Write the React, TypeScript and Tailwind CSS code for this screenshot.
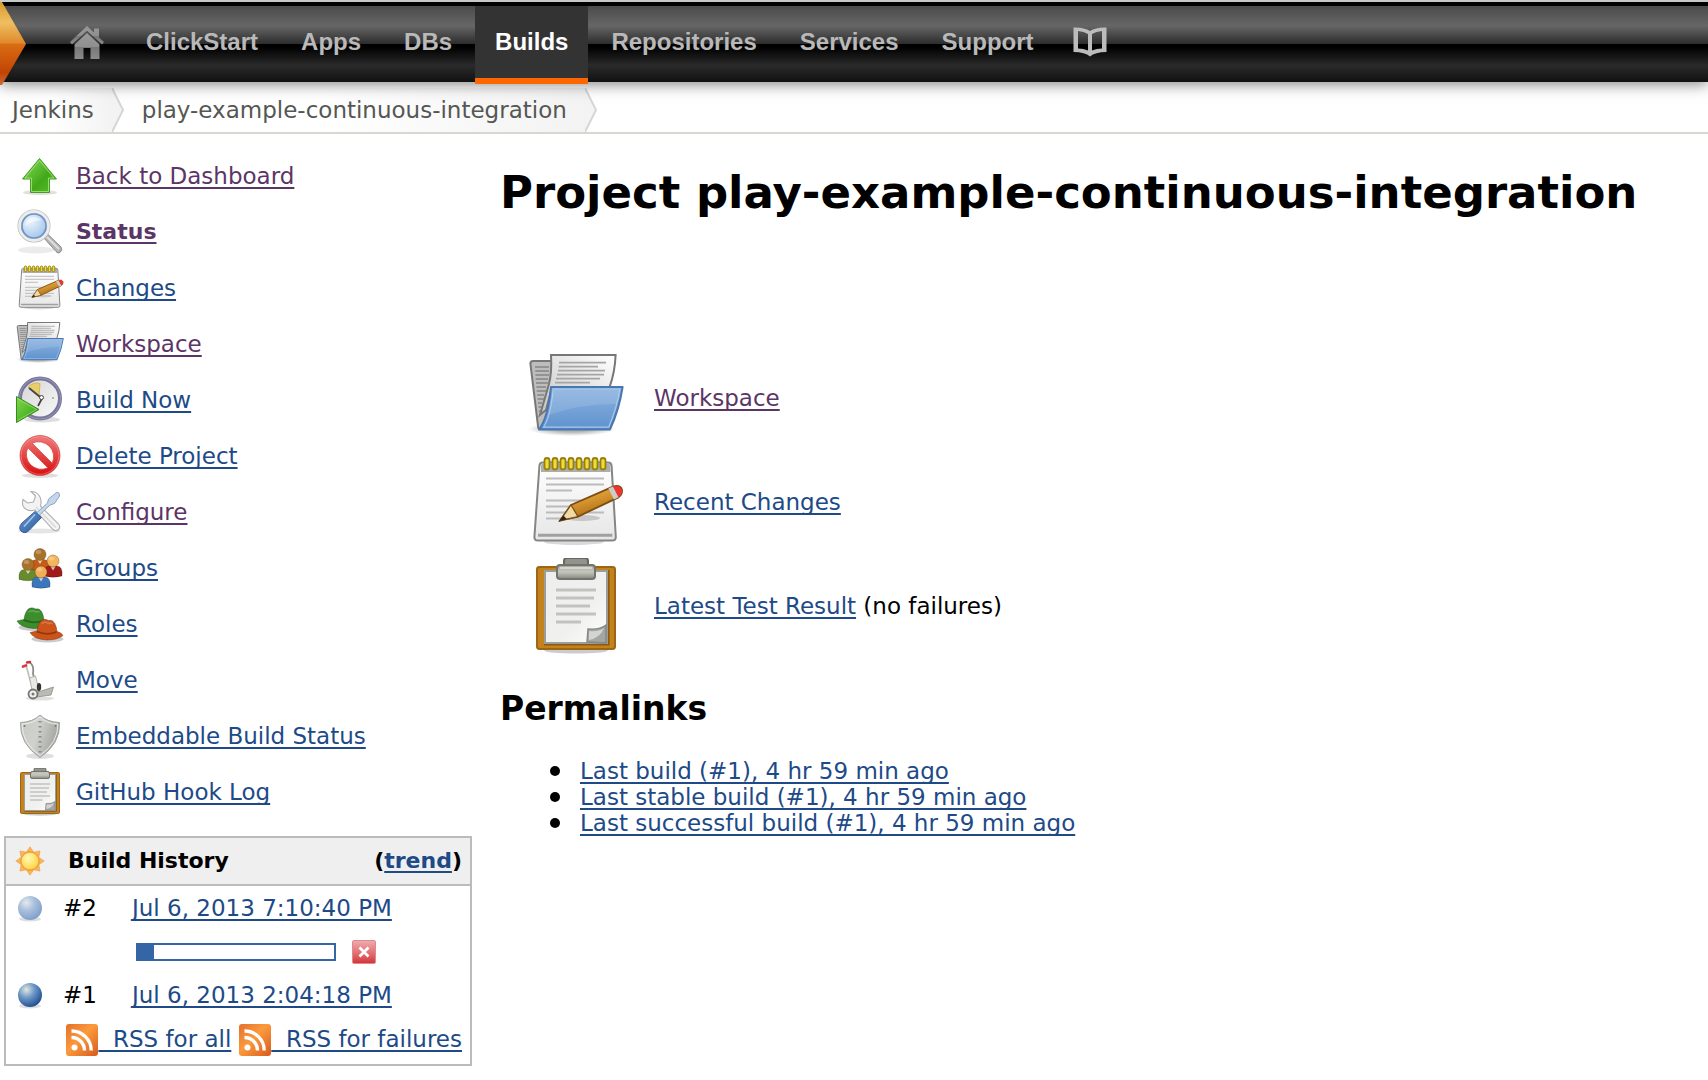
import React from "react";

type IconProps = { className?: string };

const svgProps = (className = "size-12") => ({
  viewBox: "0 0 48 48",
  className: `${className} block shrink-0`,
  "aria-hidden": true as const,
});

function Folder({ className }: IconProps) {
  return (
    <svg {...svgProps(className)}>
      <defs>
        <linearGradient id="fo-front" x1="0" y1="0" x2="0" y2="1">
          <stop offset="0" stopColor="#8bb2df" />
          <stop offset="0.5" stopColor="#76a3d7" />
          <stop offset="1" stopColor="#5f92cd" />
        </linearGradient>
        <linearGradient id="fo-paper" x1="1" y1="0" x2="0" y2="1">
          <stop offset="0" stopColor="#ffffff" />
          <stop offset="1" stopColor="#c4c4c4" />
        </linearGradient>
        <radialGradient id="fo-shadow">
          <stop offset="0.4" stopColor="#000" stopOpacity="0.3" />
          <stop offset="1" stopColor="#000" stopOpacity="0" />
        </radialGradient>
      </defs>
      <ellipse cx="22" cy="39.500" rx="22" ry="3.500" fill="url(#fo-shadow)" />
      <path d="M1.200 6.800Q1.200 5.500 2.500 5.500H12V30L6 39.500Q5 39.500 5 38Z" fill="#bdbdbd" stroke="#777" />
      <path d="M3.500 8.500H10.500M3.600 10.500H10.500M3.700 12.500H10.500M3.800 14.500H10M4 16.500H10M4.200 18.500H9M4.400 20.500H9M4.600 22.500H8M4.800 24.500H8M5 26.500H7M5.200 28.500H7M5.400 30.500H7" stroke="#858585" strokeWidth="0.700" />
      <path d="M11.500 2.500H43.800Q43.500 11 40.800 18.500H12L9 30L6 32.500Q8.500 24 10.500 17Q12 11 11.500 2.500Z" fill="url(#fo-paper)" stroke="#777" />
      <path d="M15.500 6.300H39M15.300 8.300H35M15 10.300H38.500M14.500 12.300H38M14 14.300H36M13.500 16.300H31" stroke="#a5a5a5" strokeWidth="0.800" />
      <path d="M11.500 18.500H47.300Q45.500 30 41 39.700H5.500Q10 34 11.500 18.500Z" fill="url(#fo-front)" stroke="#4877b2" strokeLinejoin="round" />
      <path d="M12.600 19.600H46Q44.300 29.500 40.300 38.600H7.800Q11.300 33 12.600 19.600Z" fill="none" stroke="#a9c7e9" strokeWidth="0.600" />
      <path d="M12.500 20H46L44.200 27Q25 27 10.500 32.500Z" fill="#fff" opacity="0.120" />
    </svg>
  );
}

function Notepad({ className }: IconProps) {
  return (
    <svg {...svgProps(className)}>
      <defs>
        <linearGradient id="np-page" x1="0" y1="0" x2="0" y2="1">
          <stop offset="0" stopColor="#ffffff" />
          <stop offset="1" stopColor="#e6e6e6" />
        </linearGradient>
        <linearGradient id="np-pen" x1="0" y1="0" x2="0.500" y2="1">
          <stop offset="0" stopColor="#f3c36d" />
          <stop offset="0.500" stopColor="#d6962f" />
          <stop offset="1" stopColor="#a66410" />
        </linearGradient>
      </defs>
      <ellipse cx="23" cy="44" rx="15" ry="1.500" fill="#000" opacity="0.150" />
      <path d="M5.700 6Q5.800 4.300 7.500 4.300H40Q41.700 4.300 41.800 6L43.900 41.500Q43.900 43.300 42 43.300H5Q3.200 43.300 3.200 41.500Z" fill="url(#np-page)" stroke="#858585" />
      <path d="M6.500 9V6Q6.500 4.800 8 4.800H39.500Q41 4.800 41.200 6V9Z" fill="#adadad" />
      <path d="M5 40.600H42.200" stroke="#a0a0a0" strokeWidth="1.500" />
      {[8.5, 12.5, 16.5, 20.500, 24.5, 28.5, 32.5, 36.500].map((x) => (
        <rect key={x} x={x - 0.25} y="2" width="2.500" height="5.700" rx="1.250" fill="#efdc38" stroke="#96800c" strokeWidth="0.900" />
      ))}
      <path d="M9 12.300H38M9 15.300H38M9 18.300H22M9 23.300H27M9 26.300H22M9 29.300H38M9 32.300H20" stroke="#bcbcbc" strokeWidth="1" />
      <ellipse cx="27" cy="32" rx="9" ry="1.500" fill="#000" opacity="0.160" />
      <path d="M21.500 25.500L42.500 16.300Q46 15.300 47 17.800Q47.300 20.500 45 21.800L25 31.300L16 33.300Z" fill="url(#np-pen)" stroke="#7d4c10" strokeWidth="0.900" />
      <path d="M21.500 25.500L25 31.300L16 33.300Z" fill="#efd9a7" stroke="#7d4c10" strokeWidth="0.600" />
      <path d="M17.700 30.800L19.500 32.600L15.500 33.500Z" fill="#302516" />
      <path d="M40.200 17.300L42.500 16.300L45.500 21.500L43 22.700Z" fill="#ccc" />
      <path d="M42.500 16.300Q46 15.300 47 17.800Q47.300 20.300 45.200 21.600Z" fill="#ee3333" />
    </svg>
  );
}

function Clipboard({ className }: IconProps) {
  return (
    <svg {...svgProps(className)}>
      <defs>
        <linearGradient id="cb-paper" x1="0" y1="0" x2="1" y2="1">
          <stop offset="0" stopColor="#eeeeec" />
          <stop offset="0.600" stopColor="#f0f0ef" />
          <stop offset="1" stopColor="#ffffff" />
        </linearGradient>
        <linearGradient id="cb-clip" x1="0" y1="0" x2="0" y2="1">
          <stop offset="0" stopColor="#a6a89e" />
          <stop offset="0.500" stopColor="#c5c7bf" />
          <stop offset="1" stopColor="#85877e" />
        </linearGradient>
      </defs>
      <ellipse cx="24" cy="46.300" rx="16" ry="1.500" fill="#000" opacity="0.200" />
      <rect x="4.500" y="4.500" width="39" height="41" rx="1.200" fill="#c4821f" stroke="#9c6715" />
      <path d="M40 6V43H8" stroke="#8a5a10" strokeWidth="1.600" fill="none" />
      <path d="M8.500 6.500H39.500V42.500H8.500Z" fill="url(#cb-paper)" stroke="#9b9d98" />
      <path d="M14 16H34M14 20H33M14 24H31M14 28H34M14 32H26.500" stroke="#c2c2c1" strokeWidth="1.500" />
      <path d="M29.500 42L30 35.500Q36 36 39 33.500V42.500Z" fill="#a4a6a2" stroke="#858783" strokeWidth="0.700" />
      <path d="M30.500 41V36.500Q35 37 38 35Q36 40 30.500 41Z" fill="#d4d4d2" />
      <path d="M18 5V1.500Q18 0 19.500 0H28.500Q30 0 30 1.500V5Z" fill="#92948b" stroke="#666862" />
      <rect x="14.500" y="3.500" width="19" height="7" rx="1.500" fill="url(#cb-clip)" stroke="#71736d" />
      <path d="M16 5H32" stroke="#deded9" strokeWidth="0.800" />
    </svg>
  );
}

function UpArrow() {
  return (
    <svg {...svgProps()}>
      <defs>
        <linearGradient id="up" x1="0" y1="0" x2="1" y2="1">
          <stop offset="0" stopColor="#8be05a" />
          <stop offset="0.600" stopColor="#42a81a" />
          <stop offset="1" stopColor="#55c028" />
        </linearGradient>
      </defs>
      <ellipse cx="24" cy="40.500" rx="17" ry="2.500" fill="#000" opacity="0.130" />
      <path d="M23.500 6.500L40.500 27H33.500V40.500H14.500V27H6.500Z" fill="url(#up)" stroke="#4c9a2c" strokeLinejoin="round" />
      <path d="M23.500 8.500L38 26H32.500V39.500H15.500V26H9Z" fill="none" stroke="#a6eb7b" strokeWidth="0.800" />
    </svg>
  );
}

function Magnifier() {
  return (
    <svg {...svgProps()}>
      <defs>
        <radialGradient id="mg" cx="0.350" cy="0.300" r="0.800">
          <stop offset="0" stopColor="#eef5fd" />
          <stop offset="1" stopColor="#9fc3ea" />
        </radialGradient>
      </defs>
      <ellipse cx="20" cy="42" rx="18" ry="3.500" fill="#000" opacity="0.080" />
      <path d="M27 29L31 25.500L45 39Q47 42 44 44.500Q42 46 40 43.500Z" fill="#b4b4b4" stroke="#8b8b8b" />
      <path d="M31 29L43 41" stroke="#e0e0e0" strokeWidth="1.800" />
      <circle cx="18" cy="18" r="14.500" fill="none" stroke="#b5b5b5" strokeWidth="4" />
      <circle cx="18" cy="18" r="14.500" fill="none" stroke="#ececec" strokeWidth="2.800" />
      <circle cx="18" cy="18" r="12" fill="url(#mg)" stroke="#6a91c8" strokeWidth="1.600" />
      <path d="M9 18.500Q9.500 9.500 18.500 9Q23.500 9.500 25.500 12.500Q14.500 12.500 9 18.500Z" fill="#fff" opacity="0.500" />
    </svg>
  );
}

function ClockPlay() {
  return (
    <svg {...svgProps()}>
      <defs>
        <linearGradient id="cp-face" x1="0" y1="0" x2="1" y2="1">
          <stop offset="0" stopColor="#d4d4d4" />
          <stop offset="1" stopColor="#fafafa" />
        </linearGradient>
        <linearGradient id="cp-play" x1="0" y1="0" x2="1" y2="1">
          <stop offset="0" stopColor="#80d94b" />
          <stop offset="1" stopColor="#2e9e10" />
        </linearGradient>
      </defs>
      <ellipse cx="26" cy="43.500" rx="18" ry="3" fill="#000" opacity="0.130" />
      <circle cx="24" cy="22.500" r="20" fill="url(#cp-face)" stroke="#77769b" strokeWidth="4" />
      <circle cx="24" cy="22.500" r="20.500" fill="none" stroke="#9796b5" strokeWidth="1" />
      <path d="M23 21L12 11Q18 5.500 24 7.500Z" fill="#e9cd68" stroke="#c9b058" strokeWidth="0.800" />
      <path d="M13 12L26 22.500L22 30" stroke="#454545" strokeWidth="1.800" fill="none" />
      <circle cx="25.500" cy="21.500" r="2" fill="#fff" stroke="#444" />
      <circle cx="37" cy="22" r="0.900" fill="#999" />
      <path d="M0.500 20.500L23 33.500L0.500 46.500Z" fill="url(#cp-play)" stroke="#3a8a20" strokeLinejoin="round" />
      <path d="M1.500 22.500L20.500 33.500L1.500 44.500" fill="none" stroke="#a4e77c" strokeWidth="0.600" />
    </svg>
  );
}

function NoEntry() {
  return (
    <svg {...svgProps()}>
      <defs>
        <linearGradient id="ne" x1="0" y1="0" x2="0" y2="1">
          <stop offset="0" stopColor="#f07b7b" />
          <stop offset="0.600" stopColor="#e03a3a" />
          <stop offset="1" stopColor="#d90d0d" />
        </linearGradient>
      </defs>
      <ellipse cx="24" cy="43.500" rx="18" ry="2.500" fill="#000" opacity="0.130" />
      <path fillRule="evenodd" d="M24 3.500A20 20 0 1 0 24 43.500A20 20 0 1 0 24 3.500ZM16.200 11.200A15 15 0 0 1 36.200 31.200ZM11.800 15.800A15 15 0 0 0 31.800 35.800Z" fill="url(#ne)" stroke="#d94b4b" strokeWidth="0.800" />
      <circle cx="24" cy="23.500" r="18.800" fill="none" stroke="#f7a5a5" strokeWidth="0.800" opacity="0.600" />
    </svg>
  );
}

function Tools() {
  return (
    <svg {...svgProps()}>
      <defs>
        <linearGradient id="tl" x1="0" y1="0" x2="1" y2="1">
          <stop offset="0" stopColor="#6c9bd2" />
          <stop offset="1" stopColor="#275a9b" />
        </linearGradient>
      </defs>
      <ellipse cx="23" cy="43" rx="21" ry="2.500" fill="#000" opacity="0.100" />
      <path d="M15 3.500L19.500 8L17.500 14L11.500 15L7 11.500Q5 18.500 10.500 21.500Q14 23.500 19 22L37 41.500Q40 44 42.500 41.500Q45 39 42.500 36L24.500 18Q26 12.500 23.500 8Q21 3.500 15 3.500Z" fill="#f3f3f3" stroke="#b0b0b0" strokeWidth="1.100" />
      <path d="M20 19L40 39.500" stroke="#d6d6d6" strokeWidth="1.200" />
      <path d="M32.500 11L40.500 4.500Q44 4 43.500 8L38.500 15.500L34 17L22 28.500L19.500 26L31.500 15Z" fill="#c3d6ea" stroke="#8ba6c2" strokeWidth="1" />
      <path d="M19 23.500L25.500 29.500L13 42.500Q9 46.500 5 43Q2 39.500 6 35Z" fill="url(#tl)" stroke="#34609b" />
      <path d="M19 26.500L8 38.500" stroke="#a8c6ea" strokeWidth="1.500" />
    </svg>
  );
}

function Person({ x, y, skin, coat }: { x: number; y: number; skin: string; coat: string }) {
  return (
    <g transform={`translate(${x} ${y})`}>
      <path d="M-9 17.500Q-10 8 -4 7.500H4Q10 8 9 17.500Q0 20 -9 17.500Z" fill={coat} stroke="#000" strokeOpacity="0.250" strokeWidth="0.800" />
      <path d="M-2.500 8L0 12L2.500 8Z" fill="#fff" opacity="0.700" />
      <circle cx="0" cy="2.500" r="6" fill={skin} stroke="#6b4412" strokeOpacity="0.500" strokeWidth="0.800" />
      <ellipse cx="-1.500" cy="0" rx="2.800" ry="2" fill="#fff" opacity="0.250" />
    </g>
  );
}

function Groups() {
  return (
    <svg {...svgProps()}>
      <Person x={24} y={8} skin="#a8722a" coat="#c45b17" />
      <Person x={12} y={18} skin="#a8722a" coat="#688b2d" />
      <Person x={37} y={14.5} skin="#f4b45c" coat="#a01b1b" />
      <Person x={25} y={25.5} skin="#f2ae55" coat="#3c77bd" />
    </svg>
  );
}

function Hat({ fill, dark, transform }: { fill: string; dark: string; transform: string }) {
  return (
    <g transform={transform}>
      <ellipse cx="1" cy="10.500" rx="16" ry="3.500" fill="#000" opacity="0.200" />
      <path d="M-16.500 4Q-13 3 -9.500 2.500Q-8 -8 -3 -9Q0 -9.500 2 -8Q6 -9 8 -5.500Q10 -2 10.500 3Q15 4 16.500 7Q11 11.500 0 11.500Q-13 10.500 -16.500 4Z" fill={fill} stroke={dark} strokeOpacity="0.700" strokeWidth="0.700" />
      <path d="M-9.500 2Q0 6.500 10 2.500V4.500Q0 8 -10 4Z" fill={dark} opacity="0.750" />
      <path d="M-5 -5Q0 -7.500 2 -5Q4 -6 6 -5" fill="none" stroke="#fff" strokeOpacity="0.220" strokeWidth="1.400" />
    </g>
  );
}

function Roles() {
  return (
    <svg {...svgProps()}>
      <Hat transform="translate(17.5 17)" fill="#3c8d2c" dark="#22551c" />
      <Hat transform="translate(30.5 28.5)" fill="#cc541a" dark="#7d300c" />
    </svg>
  );
}

function HandTruck() {
  return (
    <svg {...svgProps()}>
      <ellipse cx="24" cy="42.500" rx="14" ry="2" fill="#000" opacity="0.120" />
      <path d="M13 6Q15.500 7 17 11Q17.500 15 17 18L20 27L23 36" fill="none" stroke="#8b8b86" strokeWidth="1.800" />
      <path d="M10 9L13 20L18 36" fill="none" stroke="#c2c2bd" strokeWidth="1.800" />
      <path d="M7 10.500L10 9.500" stroke="#dd3a40" strokeWidth="2.800" strokeLinecap="round" />
      <path d="M11 6.500L14 6" stroke="#cf3238" strokeWidth="2.500" strokeLinecap="round" />
      <path d="M13.500 22L19.500 20L23 34H16Z" fill="#e8e8e5" stroke="#a5a5a1" strokeWidth="0.800" />
      <ellipse cx="23" cy="31" rx="2.200" ry="4" fill="#333" />
      <path d="M22 36L37.500 31L35 39L21 41Z" fill="#b9bbb4" stroke="#8c8e88" strokeWidth="0.800" />
      <circle cx="17" cy="38" r="4.500" fill="#f0f0f0" stroke="#757570" strokeWidth="1.800" />
      <circle cx="17" cy="38" r="1.500" fill="#777" />
    </svg>
  );
}

function Shield() {
  return (
    <svg {...svgProps()}>
      <defs>
        <linearGradient id="sh" x1="0" y1="0" x2="1" y2="0.300">
          <stop offset="0" stopColor="#c6c8c4" />
          <stop offset="0.500" stopColor="#d0d2ce" />
          <stop offset="1" stopColor="#a3a5a0" />
        </linearGradient>
      </defs>
      <ellipse cx="24" cy="44" rx="14" ry="3" fill="#000" opacity="0.130" />
      <path d="M24 3Q31 10 43.500 10.500Q44.500 32 24 45.500Q3.500 32 4.500 10.500Q17 10 24 3Z" fill="url(#sh)" stroke="#a1a39e" />
      <path d="M24 5Q31 12 42 12Q42 31 24 43.500Q6 31 6 12Q17 12 24 5Z" fill="none" stroke="#ececec" strokeWidth="1" />
      <path d="M24 9V41" stroke="#8b8d88" strokeWidth="3" strokeDasharray="1.500 3.500" />
      <circle cx="8.500" cy="14" r="1" fill="#777" />
      <circle cx="39.500" cy="14" r="1" fill="#777" />
    </svg>
  );
}

function Sun() {
  return (
    <svg viewBox="0 0 32 32" className="block size-8" aria-hidden>
      <defs>
        <radialGradient id="sun" cx="0.400" cy="0.350" r="0.700">
          <stop offset="0" stopColor="#fff9b5" />
          <stop offset="1" stopColor="#fdd13a" />
        </radialGradient>
      </defs>
      {[0, 45, 90, 135, 180, 225, 270, 315].map((a) => (
        <path key={a} d="M12.500 7L16 1.800L19.500 7Z" fill="#f9b55a" stroke="#ee9c3c" strokeWidth="0.600" transform={`rotate(${a} 16 16)`} />
      ))}
      <circle cx="16" cy="16" r="9" fill="url(#sun)" stroke="#f2a03a" strokeWidth="1.300" />
    </svg>
  );
}

function Ball({ faded }: { faded?: boolean }) {
  const id = faded ? "ball-faded" : "ball";
  return (
    <svg viewBox="0 0 32 32" className="block size-8" role="img" aria-label={faded ? "In progress" : "Success"}>
      <defs>
        <radialGradient id={id} cx="0.350" cy="0.280" r="0.750">
          <stop offset="0" stopColor={faded ? "#e4e9ea" : "#e0e8dc"} />
          <stop offset="0.450" stopColor={faded ? "#a9c0dd" : "#6e98c8"} />
          <stop offset="1" stopColor={faded ? "#7e9fca" : "#1f4f92"} />
        </radialGradient>
      </defs>
      <ellipse cx="16" cy="27" rx="11" ry="2.500" fill="#000" opacity="0.130" />
      <circle cx="16" cy="16" r="12" fill={`url(#${id})`} />
    </svg>
  );
}

function Rss() {
  return (
    <svg viewBox="0 0 32 32" className="inline-block size-8 align-middle" aria-hidden>
      <defs>
        <linearGradient id="rss" x1="0" y1="0" x2="1" y2="1">
          <stop offset="0" stopColor="#e3702d" />
          <stop offset="0.450" stopColor="#fb9a3c" />
          <stop offset="1" stopColor="#d85a1c" />
        </linearGradient>
      </defs>
      <rect width="32" height="32" rx="3" fill="url(#rss)" />
      <circle cx="8.500" cy="23.500" r="3" fill="#fff" />
      <path d="M5.500 13.500A13 13 0 0 1 18.500 26.500M5.500 7A19.500 19.500 0 0 1 25.200 26.500" stroke="#fff" strokeWidth="3.400" fill="none" />
    </svg>
  );
}

function A({ children, visited, bold }: { children: React.ReactNode; visited?: boolean; bold?: boolean }) {
  return (
    <a
      href="#"
      className={`underline decoration-2 underline-offset-3 [text-decoration-skip-ink:none] ${visited ? "text-[#5c3566]" : "text-[#204a87]"} ${bold ? "text-[22px] font-bold" : ""}`}
    >
      {children}
    </a>
  );
}

const tasks = [
  { label: "Back to Dashboard", Icon: UpArrow, visited: true },
  { label: "Status", Icon: Magnifier, visited: true, bold: true },
  { label: "Changes", Icon: Notepad },
  { label: "Workspace", Icon: Folder, visited: true },
  { label: "Build Now", Icon: ClockPlay },
  { label: "Delete Project", Icon: NoEntry },
  { label: "Configure", Icon: Tools, visited: true },
  { label: "Groups", Icon: Groups },
  { label: "Roles", Icon: Roles },
  { label: "Move", Icon: HandTruck },
  { label: "Embeddable Build Status", Icon: Shield },
  { label: "GitHub Hook Log", Icon: Clipboard },
];

const navItems = ["ClickStart", "Apps", "DBs", "Builds", "Repositories", "Services", "Support"];

function TopBar() {
  return (
    <header className="relative z-10 flex h-[82px] items-start border-t-2 border-[#c4c8c8] bg-black pt-1 shadow-[0_2px_14px_rgba(0,0,0,0.5)]">
      <div className="flex h-full flex-1 bg-[linear-gradient(to_bottom,#4b4b4b_0%,#666_26%,#2c2c2c_50%,#000_50%,#000_54%,#2a2a2a_78%,#111_100%)]">
        <a href="#" aria-label="Home page" className="-mt-1 w-[26px]">
          <svg viewBox="0 0 26 86" className="h-[86px] w-[26px]" aria-hidden>
            <defs>
              <linearGradient id="brand" x1="0" y1="0" x2="0" y2="1">
                <stop offset="0" stopColor="#dc9a2c" />
                <stop offset="0.250" stopColor="#eebf62" />
                <stop offset="0.490" stopColor="#e08a2c" />
                <stop offset="0.510" stopColor="#d96d14" />
                <stop offset="0.850" stopColor="#c24404" />
                <stop offset="1" stopColor="#cc6a3a" />
              </linearGradient>
            </defs>
            <path d="M0 0H2L26 42L2 83H0Z" fill="url(#brand)" />
          </svg>
        </a>
        <nav className="flex h-full items-start gap-[3px] pl-6 font-['Liberation_Sans',Arial,sans-serif] text-2xl font-bold text-[#b9b9b9]">
          <a href="#" aria-label="Home" className="flex h-[72px] w-[73px] items-center pl-5">
            <svg viewBox="0 0 34 33" className="h-[33px] w-[34px]" aria-hidden>
              <defs>
                <linearGradient id="home" x1="0" y1="0" x2="0" y2="1">
                  <stop offset="0" stopColor="#999" />
                  <stop offset="0.520" stopColor="#8f8f8f" />
                  <stop offset="0.540" stopColor="#787878" />
                  <stop offset="1" stopColor="#8a8a8a" />
                </linearGradient>
              </defs>
              <path d="M17 0L24 6.500V2.500H29V11.500L34 16L32 18.500L17 4.800L2 18.500L0 16Z" fill="url(#home)" />
              <path d="M17 7L29.500 18.500V33H20.500V22H13.500V33H4.500V18.500Z" fill="url(#home)" />
            </svg>
          </a>
          {navItems.map((item) =>
            item === "Builds" ? (
              <a key={item} href="#" aria-current="page" className="flex h-[78px] items-center border-b-6 border-[#ff6600] bg-[#333] px-5 text-white">
                {item}
              </a>
            ) : (
              <a key={item} href="#" className="flex h-[72px] items-center px-5">
                {item}
              </a>
            ),
          )}
          <a href="#" aria-label="Documentation" className="flex h-[72px] items-center px-4">
            <svg viewBox="0 0 34 30" className="h-[30px] w-[34px]" aria-hidden>
              <path fillRule="evenodd" d="M0.500 0.500Q11 0 17 4Q23 0 33.500 0.500V25Q22 25 17 29.500Q12 25 0.500 25ZM5 4V21.500Q10.500 21.500 15 23.500V7Q11 4.500 5 4ZM29 4Q23 4.500 19 7V23.500Q23.500 21.500 29 21.500Z" fill="#bcbcbc" />
            </svg>
          </a>
        </nav>
      </div>
    </header>
  );
}

function Crumb({ children }: { children: React.ReactNode }) {
  return (
    <li className="flex items-stretch">
      <a href="#" className="flex items-center bg-linear-to-r from-white from-40% to-[#f3f3f3] pr-[18px]">
        {children}
      </a>
      <svg viewBox="0 0 12 44" className="h-11 w-3" aria-hidden>
        <path d="M0 0L11 22L0 44Z" fill="#f3f3f3" />
        <path d="M0 0L11 22L0 44" fill="none" stroke="#d6d6d6" strokeWidth="2" />
      </svg>
    </li>
  );
}

function BuildHistory() {
  return (
    <section className="mt-4 border-2 border-[#bbb]">
      <div className="flex h-12 items-center border-b-2 border-[#bbb] bg-[#efefef] px-2 text-[22px] font-bold">
        <Sun />
        <h2 className="ml-[22px] flex-1">Build History</h2>
        <span>
          (<A>trend</A>)
        </span>
      </div>
      <table className="w-full border-collapse">
        <tbody>
          <tr className="h-[44px]">
            <td className="w-[57px] pl-2">
              <Ball faded />
            </td>
            <td className="w-[69px]">#2</td>
            <td>
              <A>Jul 6, 2013 7:10:40 PM</A>
            </td>
          </tr>
          <tr className="h-[44px]">
            <td colSpan={2} />
            <td>
              <div className="flex items-center gap-4 pl-1">
                <div role="progressbar" aria-label="Build #2 progress" aria-valuenow={9} aria-valuemin={0} aria-valuemax={100} className="h-[18px] w-[200px] border-2 border-[#3465a4]">
                  <div className="h-full w-4 bg-[#3465a4]" />
                </div>
                <button type="button" aria-label="Cancel build" className="flex size-6 items-center justify-center rounded-xs border border-[#e08a8e] bg-linear-to-b from-[#ecaaae] to-[#d4343b]">
                  <svg viewBox="0 0 12 12" className="size-3" aria-hidden>
                    <path d="M1.500 1.500L10.500 10.500M10.500 1.500L1.500 10.500" stroke="#fff" strokeWidth="2.800" />
                  </svg>
                </button>
              </div>
            </td>
          </tr>
          <tr className="h-[42px]">
            <td className="pl-2">
              <Ball />
            </td>
            <td>#1</td>
            <td>
              <A>Jul 6, 2013 2:04:18 PM</A>
            </td>
          </tr>
        </tbody>
      </table>
      <div className="flex h-[48px] items-center justify-end gap-2 pr-2 whitespace-nowrap">
        <A>
          <Rss />&nbsp; RSS for all
        </A>
        <A>
          <Rss />&nbsp; RSS for failures
        </A>
      </div>
    </section>
  );
}

const projectLinks = [
  { label: "Workspace", Icon: Folder, visited: true, note: "" },
  { label: "Recent Changes", Icon: Notepad, visited: false, note: "" },
  { label: "Latest Test Result", Icon: Clipboard, visited: false, note: " (no failures)" },
];

const permalinks = [
  "Last build (#1), 4 hr 59 min ago",
  "Last stable build (#1), 4 hr 59 min ago",
  "Last successful build (#1), 4 hr 59 min ago",
];

export default function App() {
  return (
    <div className="min-h-screen bg-white font-['DejaVu_Sans',Verdana,sans-serif] text-[23px] leading-[26px] text-black">
      <TopBar />
      <nav aria-label="Breadcrumb" className="border-b-2 border-[#d8d8d2] pt-1.5">
        <ol className="flex h-11 gap-[18px] pl-3 text-[#555753]">
          <Crumb>Jenkins</Crumb>
          <Crumb>play-example-continuous-integration</Crumb>
        </ol>
      </nav>
      <div className="flex items-start">
        <aside className="w-[472px] shrink-0 pt-[14px] pl-1">
          <ul className="pl-3">
            {tasks.map(({ label, Icon, visited, bold }) => (
              <li key={label} className="flex h-14 items-center gap-3">
                <Icon />
                <A visited={visited} bold={bold}>
                  {label}
                </A>
              </li>
            ))}
          </ul>
          <BuildHistory />
        </aside>
        <main className="min-w-0 flex-1 pt-8 pl-7">
          <h1 className="text-[45px] leading-[54px] font-bold">Project play-example-continuous-integration</h1>
          <ul className="mt-[130px] flex flex-col gap-2 pl-7">
            {projectLinks.map(({ label, Icon, visited, note }) => (
              <li key={label} className="flex items-center gap-[30px]">
                <Icon className="size-24" />
                <span>
                  <A visited={visited}>{label}</A>
                  {note}
                </span>
              </li>
            ))}
          </ul>
          <h2 className="mt-8 text-[33px] leading-[46px] font-bold">Permalinks</h2>
          <ul className="mt-[26px] pl-[50px]">
            {permalinks.map((label) => (
              <li key={label} className="flex items-center gap-5 before:size-[10px] before:rounded-full before:bg-black">
                <A>{label}</A>
              </li>
            ))}
          </ul>
        </main>
      </div>
    </div>
  );
}
